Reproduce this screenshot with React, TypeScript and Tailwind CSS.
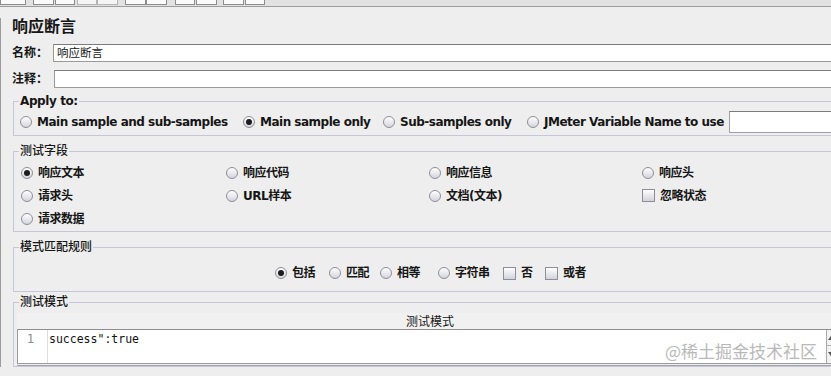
import React from "react";

const Radio = ({ checked }: { checked?: boolean }) => (
  <span className="flex h-[12px] w-[12px] shrink-0 items-center justify-center rounded-full border border-[#8e8e96] bg-gradient-to-b from-white to-[#d4d4de]">
    {checked && <span className="h-[6px] w-[6px] rounded-full bg-[#1c1c1c]" />}
  </span>
);

const Check = () => (
  <span className="h-[13px] w-[13px] shrink-0 border border-[#8e8e96] bg-gradient-to-b from-white to-[#d2d2dc]" />
);

interface OptProps {
  label: string;
  checked?: boolean;
  box?: boolean;
  w?: string;
}

const Opt = ({ label, checked, box, w = "" }: OptProps) => (
  <div className={`flex shrink-0 items-center gap-[5px] ${w}`}>
    {box ? <Check /> : <Radio checked={checked} />}
    <span className="font-bold tracking-[-0.5px] whitespace-nowrap">{label}</span>
  </div>
);

const Legend = ({ children, bold }: { children: React.ReactNode; bold?: boolean }) => (
  <legend
    className={`ml-[5px] h-[14px] px-[1px] text-[12px] leading-[14px] ${
      bold ? "font-bold tracking-[-0.4px]" : "font-medium"
    }`}
  >
    {children}
  </legend>
);

const tabs = [
  [0, 26],
  [33, 21],
  [55, 20],
  [77, 20],
  [97, 21],
  [125, 21],
  [146, 21],
  [175, 20],
  [196, 21],
  [223, 21],
  [245, 20],
];

export default function App() {
  return (
    <div className="relative h-[376px] w-[831px] overflow-hidden bg-[#eeeeee] font-['DejaVu_Sans','Noto_Sans_CJK_SC',sans-serif] text-[12px] text-[#161616]">
      {/* cut-off toolbar */}
      <div className="relative h-[6px] bg-[#e2e2e2]">
        {tabs.map(([x, w], i) => (
          <div
            key={i}
            style={{ left: x, width: w }}
            className={`absolute top-0 h-[5px] border-x border-b ${
              i === 3 || i === 4 ? "border-[#b4b4b4] bg-[#f4f4f4]" : "border-[#8c8c8c] bg-[#fafafa]"
            }`}
          />
        ))}
      </div>
      <div className="h-px bg-[#9c9c9c]" />

      <div className="border-l border-[#9c9c9c] pl-[11px]">
        <div className="mt-[11px] h-[18px] text-[16px] font-bold leading-[18px]">响应断言</div>

        <div className="mt-[8px] flex h-[18px] items-center">
          <span className="w-[41px] font-bold">名称：</span>
          <div className="-mr-[20px] flex h-[18px] flex-1 items-center border border-[#9a9a9a] border-t-[#7c7c7c] bg-white pl-[3px] font-['Noto_Sans_CJK_SC',sans-serif] text-[11.5px]">
            响应断言
          </div>
        </div>

        <div className="mt-[8px] flex h-[18px] items-center">
          <span className="w-[42px] font-bold">注释：</span>
          <div className="-mr-[20px] h-[18px] flex-1 border border-[#9a9a9a] border-t-[#7c7c7c] bg-white" />
        </div>

        <fieldset className="mt-[6px] -mr-[30px] ml-[1px] border border-[#c6c6d8]">
          <Legend bold>Apply to:</Legend>
          <div className="flex h-[22px] items-center pl-[6px] mt-[3px] mb-[2px]">
            <Opt w="w-[223px]" label="Main sample and sub-samples" />
            <Opt w="w-[140px]" label="Main sample only" checked />
            <Opt w="w-[144px]" label="Sub-samples only" />
            <Opt w="w-[202px]" label="JMeter Variable Name to use" />
            <div className="h-[22px] flex-1 border border-[#a0a0a0] border-t-[#7c7c7c] bg-white" />
          </div>
        </fieldset>

        <fieldset className="mt-[8px] -mr-[30px] ml-[1px] border border-[#c6c6d8]">
          <Legend>测试字段</Legend>
          <div className="mt-[3px] mb-[1px] grid grid-cols-[205px_203px_213px_1fr] pl-[7px] [&>*]:h-[23px]">
            <Opt label="响应文本" checked />
            <Opt label="响应代码" />
            <Opt label="响应信息" />
            <Opt label="响应头" />
            <Opt label="请求头" />
            <Opt label="URL样本" />
            <Opt label="文档(文本)" />
            <Opt label="忽略状态" box />
            <Opt label="请求数据" />
          </div>
        </fieldset>

        <fieldset className="mt-[8px] -mr-[30px] ml-[1px] border border-[#c6c6d8]">
          <Legend>模式匹配规则</Legend>
          <div className="mt-[8px] mb-[7px] flex h-[22px] items-center pl-[261px]">
            <Opt w="w-[54px]" label="包括" checked />
            <Opt w="w-[51px]" label="匹配" />
            <Opt w="w-[58px]" label="相等" />
            <Opt w="w-[65px]" label="字符串" />
            <Opt w="w-[42px]" label="否" box />
            <Opt label="或者" box />
          </div>
        </fieldset>

        <fieldset className="mt-[3px] -mr-[30px] ml-[1px] border border-[#c6c6d8]">
          <Legend>测试模式</Legend>
          <div className="mt-[4px] w-[829px] pl-[3px]">
            <div className="flex h-[17px] items-center justify-center border-b border-[#8e8e8e] bg-[#f1f1f1] font-['Noto_Sans_CJK_SC',sans-serif] text-[12px]">
              测试模式
            </div>
            <div className="flex h-[34px] border-b border-l border-[#9a9a9a] bg-white">
              <div className="w-[30px] border-r border-[#dcdcdc] pr-[13px] pt-[1px] text-right font-['DejaVu_Sans_Mono',monospace] text-[11.5px] leading-[17px] text-[#8a8a8a]">
                1
              </div>
              <div className="w-[778px] pl-[1px] pt-[1px] font-['DejaVu_Sans_Mono',monospace] text-[11.5px] leading-[17px] text-[#111]">
                success":true
              </div>
              <div className="flex w-[15px] flex-col border-l border-[#a8a8a8] bg-[#f2f2f2]">
                <span className="flex h-[16px] items-center border-b border-[#b5b5b5] pl-[1px]">
                  <svg width="7" height="5" viewBox="0 0 7 5">
                    <path d="M0 5 L3.5 0 L7 5 Z" fill="#555" />
                  </svg>
                </span>
                <span className="flex h-[16px] items-center pl-[1px]">
                  <svg width="7" height="5" viewBox="0 0 7 5">
                    <path d="M0 0 L3.5 5 L7 0 Z" fill="#555" />
                  </svg>
                </span>
              </div>
            </div>
            <div className="mt-[1px] h-px bg-[#a4a4a4]" />
          </div>
        </fieldset>
      </div>

      <div className="absolute right-[14px] top-[341px] font-['Noto_Sans_CJK_SC',sans-serif] text-[17px] leading-[20px] text-[#b9b9b9]">
        @稀土掘金技术社区
      </div>
    </div>
  );
}
